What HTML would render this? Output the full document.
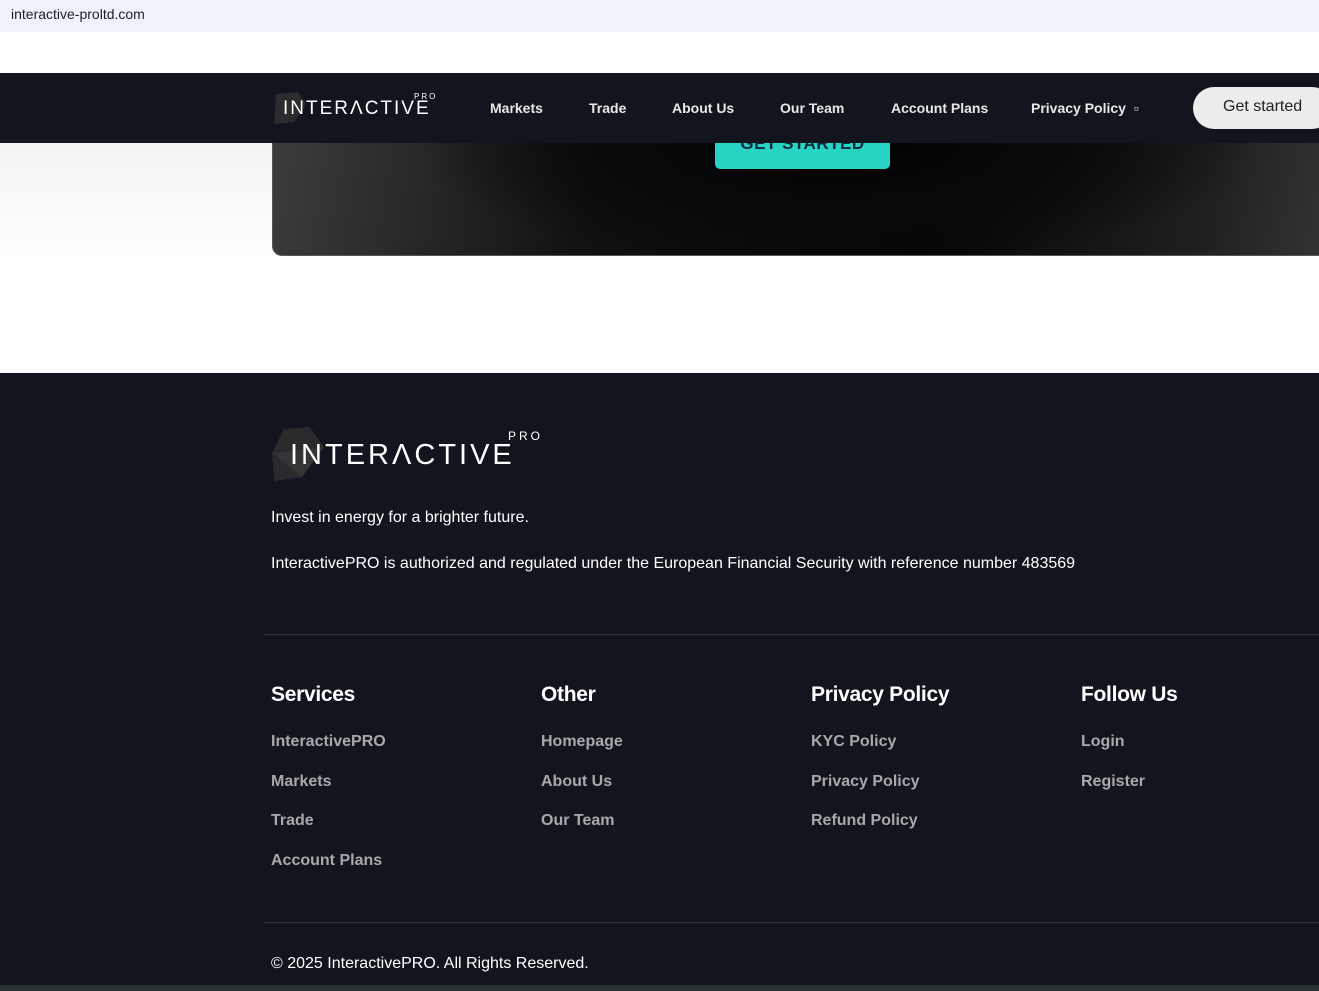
<!DOCTYPE html>
<html><head><meta charset="utf-8"><style>
*{margin:0;padding:0;box-sizing:border-box}
body{width:1319px;height:991px;overflow:hidden;background:#fff;font-family:"Liberation Sans",sans-serif;position:relative}
.url{position:absolute;left:0;top:0;width:1319px;height:32px;background:#eef2fa;font-size:14px;color:#222;padding:6px 11px}
.fade{position:absolute;left:0;top:143px;width:272px;height:120px;background:linear-gradient(#f3f3f3,#fff)}
.hero{position:absolute;left:272px;top:100px;width:1100px;height:156px;border-radius:0 0 10px 10px;border:1px solid #555;
background:radial-gradient(ellipse 420px 130px at 560px 40px,#000 0%,#08090b 50%,rgba(8,9,11,0) 100%),linear-gradient(100deg,#3c3d3c 0%,#111 30%,#050506 60%,#202020 85%,#3a3b3a 100%)}
.cta{position:absolute;left:715px;top:120px;width:175px;height:49px;background:#27d3c2;border-radius:5px;color:#0d2b3a;font-weight:bold;font-size:17px;text-align:center;padding-top:14px;letter-spacing:.5px}
nav{position:absolute;left:0;top:73px;width:1319px;height:70px;background:#12151d}
nav a{position:absolute;top:27px;color:#e8e8e8;font-weight:bold;font-size:14px;text-decoration:none}
.btn{position:absolute;left:1193px;top:87px;width:140px;height:42px;background:#ececec;border-radius:21px;font-size:16px;color:#222;padding:11px 0 0 30px}
.logo{position:absolute;color:#fff;letter-spacing:2px}
footer{position:absolute;left:0;top:373px;width:1319px;height:618px;background:#12151d;color:#fff}
.t{position:absolute;font-size:16px;color:#fff}
.h{position:absolute;font-size:21px;font-weight:bold;top:310px;letter-spacing:-.3px}
.l{position:absolute;font-size:16px;font-weight:bold;color:#a9a9ab}
.hr{position:absolute;left:263px;width:1056px;height:1px;background:#2c3038}
</style></head><body>
<div class="url">interactive-proltd.com</div>
<div class="fade"></div>
<div class="hero"></div>
<div class="cta">GET STARTED</div>
<nav>
<svg style="position:absolute;left:272px;top:17px" width="40" height="38"><polygon points="4,4 26,2 34,14 22,32 2,34" fill="#2c2c2e"/></svg>
<div class="logo" style="left:283px;top:25px;font-size:19px;">INTERΛCTIVE</div>
<div class="logo" style="left:414px;top:19px;font-size:8px">PRO</div>
<a style="left:490px">Markets</a><a style="left:589px">Trade</a><a style="left:672px">About Us</a><a style="left:780px">Our Team</a><a style="left:891px">Account Plans</a><a style="left:1031px">Privacy Policy &nbsp;▫</a>
</nav>
<div class="btn">Get started</div>
<footer>
<svg style="position:absolute;left:272px;top:52px" width="60" height="58"><polygon points="12,4 38,2 52,22 30,52 2,56 0,28" fill="#2a2a2c"/><polygon points="0,28 52,22 30,52" fill="#353537"/></svg>
<div class="logo" style="left:290px;top:66px;font-size:29px;letter-spacing:3px">INTERΛCTIVE</div>
<div class="logo" style="left:508px;top:56px;font-size:12px;letter-spacing:3px">PRO</div>
<div class="t" style="left:271px;top:136px">Invest in energy for a brighter future.</div>
<div class="t" style="left:271px;top:182px">InteractivePRO is authorized and regulated under the European Financial Security with reference number 483569</div>
<div class="hr" style="top:261px"></div>
<div class="h" style="left:271px">Services</div><div class="h" style="left:541px">Other</div><div class="h" style="left:811px">Privacy Policy</div><div class="h" style="left:1081px">Follow Us</div>
<div class="l" style="left:271px;top:360px">InteractivePRO</div><div class="l" style="left:271px;top:400px">Markets</div><div class="l" style="left:271px;top:439px">Trade</div><div class="l" style="left:271px;top:479px">Account Plans</div>
<div class="l" style="left:541px;top:360px">Homepage</div><div class="l" style="left:541px;top:400px">About Us</div><div class="l" style="left:541px;top:439px">Our Team</div>
<div class="l" style="left:811px;top:360px">KYC Policy</div><div class="l" style="left:811px;top:400px">Privacy Policy</div><div class="l" style="left:811px;top:439px">Refund Policy</div>
<div class="l" style="left:1081px;top:360px">Login</div><div class="l" style="left:1081px;top:400px">Register</div>
<div class="hr" style="top:549px"></div>
<div class="t" style="left:271px;top:582px">© 2025 InteractivePRO. All Rights Reserved.</div>
<div style="position:absolute;left:0;top:612px;width:1319px;height:6px;background:#2a3436"></div>
</footer>
</body></html>
